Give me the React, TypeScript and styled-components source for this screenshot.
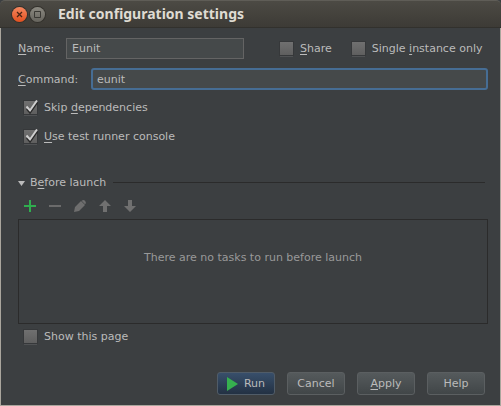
import React, { useId, useState } from "react";
import styled, { createGlobalStyle, css } from "styled-components";

const GlobalStyle = createGlobalStyle`
  * { box-sizing: border-box; }
  body { margin: 0; background: #3c3f41; }
`;

const Window = styled.div`
  display: flex;
  flex-direction: column;
  min-height: 100vh;
  background: #3c3f41;
  color: #bbbbbb;
  font: 11px/16px "DejaVu Sans", sans-serif;
`;

const TitleBar = styled.header`
  display: flex;
  align-items: center;
  height: 28px;
  padding: 1px 12px 0;
  border-top: 1px solid #5f5d57;
  border-bottom: 1px solid #32312d;
  border-radius: 5px 5px 0 0;
  background: linear-gradient(#4c4a44, #3d3b36);
`;

const WindowButton = styled.button<{ $close?: boolean }>`
  display: flex;
  width: 15px;
  height: 15px;
  margin-right: 3px;
  padding: 0;
  border: 0;
  border-radius: 50%;
  background: ${(p) =>
    p.$close ? "linear-gradient(#f5875f, #e2501f)" : "linear-gradient(#8b8981, #66645d)"};
  box-shadow: 0 0 0 1px #33312c;
`;

const Title = styled.h1`
  margin: 0 0 0 10px;
  padding-bottom: 2px;
  color: #dfdbd2;
  font: bold 14px/20px "Noto Sans", sans-serif;
`;

const Body = styled.form`
  display: flex;
  flex: 1;
  flex-direction: column;
  padding: 10px 12px 10px 17px;
  border: 1px solid #aaa69d;
  border-top: 0;
`;

const Row = styled.div`
  display: flex;
  align-items: center;
`;

const CommandRow = styled(Row)`
  margin-top: 9px;
`;

const FieldLabel = styled.label<{ $wide?: boolean }>`
  flex: none;
  width: ${(p) => (p.$wide ? 73 : 48)}px;
`;

const CommandLabel = styled(FieldLabel)`
  padding-top: 2px;
`;

const fieldStyle = css`
  min-width: 0;
  border: 1px solid #646464;
  background: #45494a;
  color: #bbbbbb;
  font: inherit;
  outline: none;
`;

const NameInput = styled.input`
  ${fieldStyle}
  flex: 0 1 178px;
  height: 21px;
  padding: 0 5px;
`;

const CommandInput = styled.input`
  ${fieldStyle}
  flex: 1;
  height: 22px;
  padding: 0 4px;
  border: 2px solid #466d94;
  border-radius: 3px;
`;

const Options = styled.div`
  display: flex;
  gap: 19px;
  margin-left: 35px;
`;

const CheckLabel = styled.label`
  display: flex;
  align-items: center;
  gap: 6px;
  white-space: nowrap;
`;

const CheckFrame = styled.span`
  display: grid;
  width: 15px;
  height: 16px;

  > * { grid-area: 1 / 1; }
  > svg { z-index: 1; pointer-events: none; }
`;

const CheckInput = styled.input`
  appearance: none;
  width: 13px;
  height: 13px;
  margin: 1px 0 0 1px;
  background: linear-gradient(#707070, #5f5f5f);
  box-shadow: 0 0 0 1px #36383a, 0 2px 0 #505254;
`;

const CheckGroup = styled.div`
  display: flex;
  flex-direction: column;
  padding: 3px 0 0 5px;
`;

const CheckRow = styled(Row)`
  height: 29px;
`;

const SectionHeader = styled(Row)`
  gap: 7px;
  margin-top: 24px;
  padding-right: 3px;
`;

const SectionToggle = styled.button`
  display: flex;
  align-items: center;
  gap: 5px;
  padding: 0;
  border: 0;
  background: none;
  color: inherit;
  font: inherit;
`;

const Rule = styled.span`
  flex: 1;
  height: 1px;
  margin-bottom: 2px;
  background: #2b2b2b;
`;

const Toolbar = styled.div`
  display: flex;
  gap: 9px;
  margin: 7px 0 5px;
  padding-left: 4px;
`;

const ToolButton = styled.button`
  display: flex;
  width: 16px;
  height: 16px;
  padding: 0;
  border: 0;
  background: none;
`;

const TaskList = styled.div`
  height: 105px;
  padding-top: 30px;
  border: 1px solid #2b2b2b;
  color: #999999;
  text-align: center;
`;

const ShowRow = styled(Row)`
  height: 20px;
  margin-top: 3px;
  padding-left: 5px;
`;

const Footer = styled.footer`
  display: flex;
  justify-content: flex-end;
  gap: 12px;
  margin-top: auto;
  padding: 25px 3px 0 0;
`;

const ActionButton = styled.button<{ $primary?: boolean }>`
  display: flex;
  align-items: center;
  justify-content: center;
  gap: 6px;
  width: 58px;
  height: 23px;
  padding: 0;
  border: 1px solid ${(p) => (p.$primary ? "#505c68" : "#5b5f61")};
  border-radius: 3px;
  background: ${(p) =>
    p.$primary ? "linear-gradient(#384f6b, #233143)" : "linear-gradient(#555a5c, #414648)"};
  color: #bbbbbb;
  font: inherit;
`;

const Mnemonic = styled.u`
  text-decoration: underline;
  text-underline-offset: 2px;
  text-decoration-thickness: 1px;
  text-decoration-skip-ink: none;
`;

function Check({ children, initial = false }: { children: React.ReactNode; initial?: boolean }) {
  const [on, setOn] = useState(initial);
  const id = useId();
  return (
    <CheckLabel htmlFor={id}>
      <CheckFrame>
        <CheckInput id={id} type="checkbox" checked={on} onChange={() => setOn(!on)} />
        {on && (
          <svg width="15" height="16" viewBox="0 0 15 16" fill="none">
            <path d="M4 8.8 7 12.3 14 2.3" stroke="#292929" strokeWidth="2.4" />
            <path d="M3.5 6.5 7 10.5 14 0.5" stroke="#cfcfcf" strokeWidth="2" />
          </svg>
        )}
      </CheckFrame>
      <span>{children}</span>
    </CheckLabel>
  );
}

const tools = [
  { name: "Add", color: "#2fae4e", path: "M7 2h2v5h5v2H9v5H7V9H2V7h5z" },
  { name: "Remove", color: "#6b6b6b", path: "M2 7h12v2H2z" },
  { name: "Edit", color: "#6e6e6e", path: "M2 14l1-5 6-6 4 4-6 6zM10 2.400q1.600-1 3 .4t.6 3L13 6.200 9.600 2.800z" },
  { name: "Move up", color: "#707070", path: "M8 2l6 6h-4v6H6V8H2z" },
  { name: "Move down", color: "#707070", path: "M8 14l6-6h-4V2H6v6H2z" },
];

export default function App() {
  const [name, setName] = useState("Eunit");
  const [command, setCommand] = useState("eunit");
  return (
    <>
      <GlobalStyle />
      <Window>
        <TitleBar>
          <WindowButton $close aria-label="Close">
            <svg width="15" height="15" viewBox="0 0 15 15" fill="none" stroke="#4a2414" strokeWidth="1.3">
              <path d="M5 5l5 5M10 5l-5 5" />
            </svg>
          </WindowButton>
          <WindowButton aria-label="Maximize">
            <svg width="15" height="15" viewBox="0 0 15 15" fill="none" stroke="#3a3934">
              <path d="M4.5 4.5h6v6h-6z" />
            </svg>
          </WindowButton>
          <Title>Edit configuration settings</Title>
        </TitleBar>
        <Body onSubmit={(e) => e.preventDefault()}>
          <Row>
            <FieldLabel htmlFor="name"><Mnemonic>N</Mnemonic>ame:</FieldLabel>
            <NameInput id="name" value={name} onChange={(e) => setName(e.target.value)} />
            <Options>
              <Check><Mnemonic>S</Mnemonic>hare</Check>
              <Check>Single <Mnemonic>i</Mnemonic>nstance only</Check>
            </Options>
          </Row>
          <CommandRow>
            <CommandLabel $wide htmlFor="command"><Mnemonic>C</Mnemonic>ommand:</CommandLabel>
            <CommandInput id="command" value={command} onChange={(e) => setCommand(e.target.value)} />
          </CommandRow>
          <CheckGroup>
            <CheckRow><Check initial>Skip <Mnemonic>d</Mnemonic>ependencies</Check></CheckRow>
            <CheckRow><Check initial><Mnemonic>U</Mnemonic>se test runner console</Check></CheckRow>
          </CheckGroup>
          <SectionHeader>
            <SectionToggle type="button" aria-expanded="true">
              <svg width="7" height="5" viewBox="0 0 7 5"><path d="M0 0h7L3.5 5z" fill="#bbbbbb" /></svg>
              <span>B<Mnemonic>e</Mnemonic>fore launch</span>
            </SectionToggle>
            <Rule />
          </SectionHeader>
          <Toolbar role="toolbar" aria-label="Tasks">
            {tools.map((t) => (
              <ToolButton key={t.name} type="button" aria-label={t.name}>
                <svg width="16" height="16" viewBox="0 0 16 16" fill={t.color}><path d={t.path} /></svg>
              </ToolButton>
            ))}
          </Toolbar>
          <TaskList>There are no tasks to run before launch</TaskList>
          <ShowRow><Check>Show this page</Check></ShowRow>
          <Footer>
            <ActionButton $primary type="submit">
              <svg width="11" height="14" viewBox="0 0 11 14"><path d="M0 0l11 7L0 14z" fill="#36b04f" /></svg>
              Run
            </ActionButton>
            <ActionButton type="button">Cancel</ActionButton>
            <ActionButton type="button"><span><Mnemonic>A</Mnemonic>pply</span></ActionButton>
            <ActionButton type="button">Help</ActionButton>
          </Footer>
        </Body>
      </Window>
    </>
  );
}
